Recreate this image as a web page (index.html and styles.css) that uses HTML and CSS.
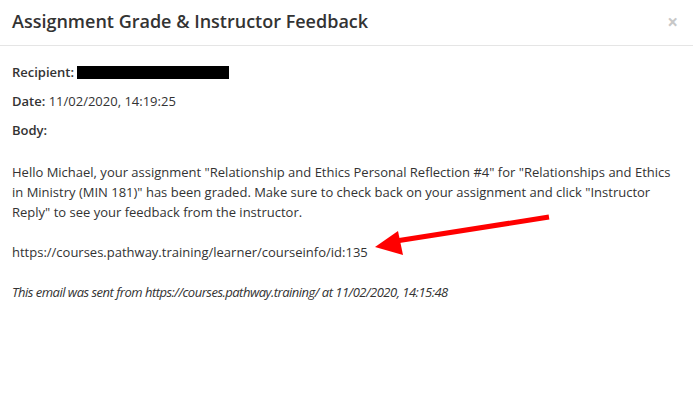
FILE: index.html
```html
<!DOCTYPE html>
<html>
<head>
<meta charset="utf-8">
<link rel="stylesheet" href="styles.css">
</head>
<body>
<div class="modal">
  <div class="modal-header">
    <h4 class="modal-title">Assignment Grade &amp; Instructor Feedback</h4>
    <span class="close">&times;</span>
  </div>
  <div class="modal-body">
    <div class="meta">
      <p><b>Recipient:</b> <span class="redact"></span></p>
      <p><b>Date:</b> 11/02/2020, 14:19:25</p>
      <p><b>Body:</b></p>
    </div>
    <div class="content">
      <p>Hello Michael, your assignment "Relationship and Ethics Personal Reflection #4" for "Relationships and Ethics in Ministry (MIN 181)" has been graded. Make sure to check back on your assignment and click "Instructor Reply" to see your feedback from the instructor.</p>
      <p>https://courses.pathway.training/learner/courseinfo/id:135</p>
      <p><i class="sent">This email was sent from https://courses.pathway.training/ at 11/02/2020, 14:15:48</i></p>
    </div>
  </div>
  <svg class="arrow" width="693" height="416" viewBox="0 0 693 416">
    <line x1="549" y1="217" x2="396" y2="241" stroke="#ff0000" stroke-width="5"/>
    <polygon points="375,247 398,231 403,255" fill="#ff0000"/>
  </svg>
</div>
</body>
</html>
```
FILE: styles.css
```css
html, body {
  margin: 0;
  padding: 0;
  background: #fff;
}
body {
  font-family: "Open Sans", "Liberation Sans", sans-serif;
  color: #333;
  font-size: 13px;
}
.modal {
  position: relative;
  width: 693px;
  height: 416px;
  overflow: hidden;
}
.modal-header {
  display: flex;
  justify-content: space-between;
  align-items: flex-start;
  padding: 8px 12px 10px 12px;
  border-bottom: 1px solid #e5e5e5;
}
.modal-title {
  margin: 0;
  font-size: 18px;
  font-weight: 600;
  line-height: 27px;
  color: #333;
}
.close {
  font-size: 19px;
  font-weight: 700;
  line-height: 1;
  color: #c8c8c8;
  margin-top: 5px;
  margin-right: 3px;
}
.modal-body {
  padding: 16px 12px;
}
.meta p {
  margin: 0 0 9px 0;
  line-height: 20px;
}
.meta p:last-child {
  margin-bottom: 22px;
}
.meta b {
  font-weight: 600;
}
.redact {
  display: inline-block;
  width: 152px;
  height: 13px;
  background: #000;
  vertical-align: -2px;
}
.content p {
  margin: 0 0 20px 0;
  line-height: 20px;
}
.sent {
  letter-spacing: -0.5px;
}
.arrow {
  position: absolute;
  left: 0;
  top: 0;
  pointer-events: none;
}
```
